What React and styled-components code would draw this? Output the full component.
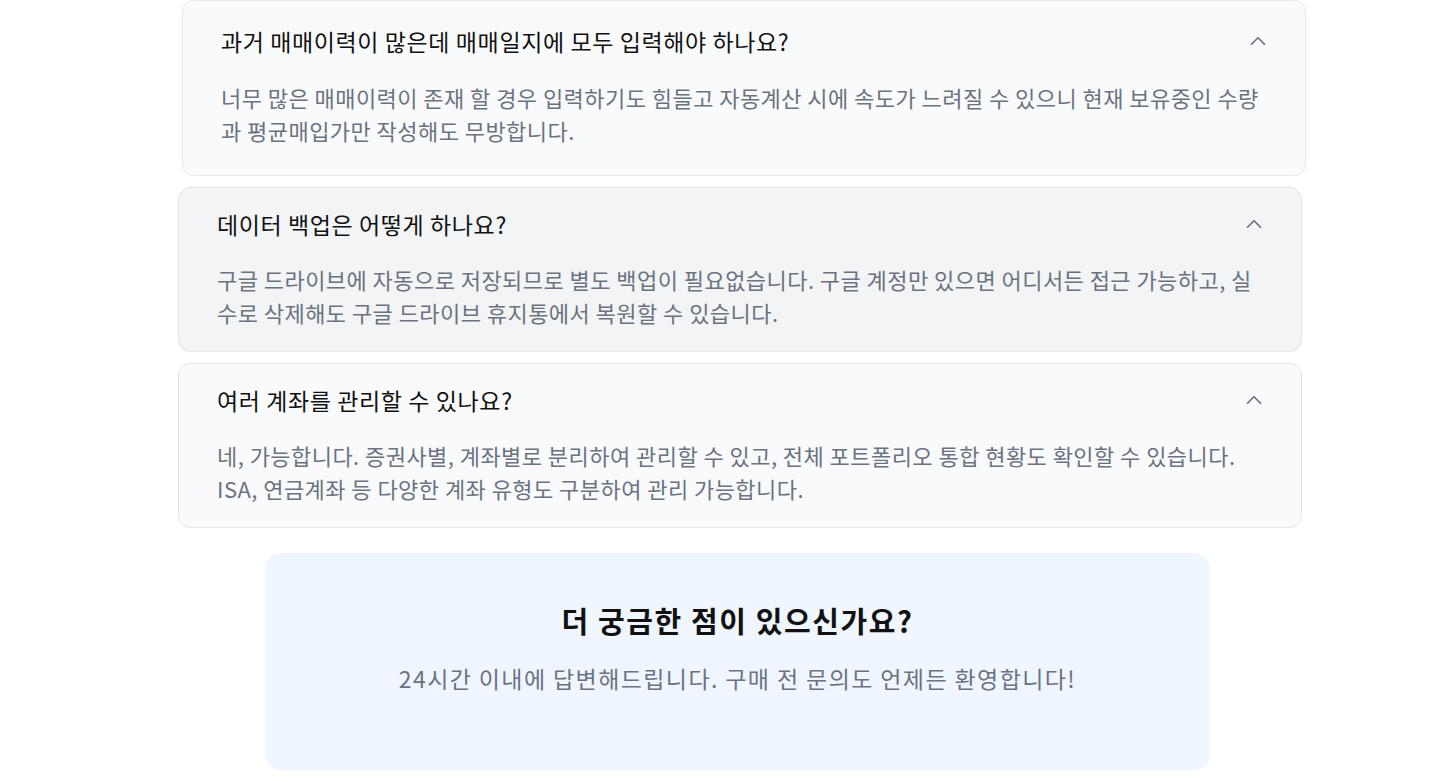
import React from "react";
import styled, { createGlobalStyle } from "styled-components";
import { ChevronUp } from "lucide-react";

const GlobalStyle = createGlobalStyle`
    * { box-sizing: border-box; }
    body {
        margin: 0;
        background: #ffffff;
        font-family: "Noto Sans CJK KR", "Noto Sans", sans-serif;
        color: #111827;
    }
`;

const Page = styled.div`
    display: flex;
    flex-direction: column;
    align-items: center;
    padding: 0 0 0 50px;
`;

const FaqList = styled.div`
    width: 1124px;
    display: flex;
    flex-direction: column;
    gap: 11px;
`;

const Card = styled.div`
    background: ${({ $hover }) => ($hover ? "#f3f4f6" : "#f9fafb")};
    border: 1px solid #e5e7eb;
    border-radius: 12px;
    padding: ${({ $active }) => ($active ? "25px 34px 28px 38px" : "21px 34px 22px 38px")};
    transform: ${({ $active }) => ($active ? "translateX(4px)" : "none")};
    display: flex;
    flex-direction: column;
    gap: ${({ $active }) => ($active ? "25px" : "24px")};
`;

const QuestionRow = styled.div`
    display: flex;
    align-items: center;
    justify-content: space-between;
`;

const Question = styled.span`
    font-size: 23px;
    line-height: 30px;
    font-weight: 400;
    letter-spacing: 0.6px;
    color: #111111;
`;

const Chevron = styled(ChevronUp)`
    color: #6b7280;
    flex-shrink: 0;
`;

const Answer = styled.p`
    margin: 0;
    font-size: 22px;
    line-height: 33px;
    letter-spacing: 0.45px;
    color: #6b7280;
    padding-right: 7px;
`;

const Contact = styled.div`
    width: 945px;
    margin: 25px 5px 0 0;
    background: #eff6ff;
    border-radius: 16px;
    padding: 46px 24px 75px;
    display: flex;
    flex-direction: column;
    align-items: center;
    gap: 21px;
`;

const ContactTitle = styled.h3`
    margin: 0;
    font-size: 29px;
    line-height: 42px;
    font-weight: 700;
    letter-spacing: 1.6px;
    color: #111111;
`;

const ContactText = styled.p`
    margin: 0;
    font-size: 23px;
    line-height: 33px;
    letter-spacing: 1.4px;
    color: #6b7280;
`;

const faqs = [
    {
        q: "과거 매매이력이 많은데 매매일지에 모두 입력해야 하나요?",
        a: "너무 많은 매매이력이 존재 할 경우 입력하기도 힘들고 자동계산 시에 속도가 느려질 수 있으니 현재 보유중인 수량과 평균매입가만 작성해도 무방합니다.",
        active: true,
    },
    {
        q: "데이터 백업은 어떻게 하나요?",
        a: "구글 드라이브에 자동으로 저장되므로 별도 백업이 필요없습니다. 구글 계정만 있으면 어디서든 접근 가능하고, 실수로 삭제해도 구글 드라이브 휴지통에서 복원할 수 있습니다.",
        hover: true,
    },
    {
        q: "여러 계좌를 관리할 수 있나요?",
        a: "네, 가능합니다. 증권사별, 계좌별로 분리하여 관리할 수 있고, 전체 포트폴리오 통합 현황도 확인할 수 있습니다. ISA, 연금계좌 등 다양한 계좌 유형도 구분하여 관리 가능합니다.",
    },
];

const App = () => {
    return (
        <>
            <GlobalStyle />
            <Page>
                <FaqList>
                    {faqs.map((item) => (
                        <Card key={item.q} $active={item.active} $hover={item.hover}>
                            <QuestionRow>
                                <Question>{item.q}</Question>
                                <Chevron size={26} strokeWidth={1.6} />
                            </QuestionRow>
                            <Answer>{item.a}</Answer>
                        </Card>
                    ))}
                </FaqList>
                <Contact>
                    <ContactTitle>더 궁금한 점이 있으신가요?</ContactTitle>
                    <ContactText>24시간 이내에 답변해드립니다. 구매 전 문의도 언제든 환영합니다!</ContactText>
                </Contact>
            </Page>
        </>
    );
};

export default App;
